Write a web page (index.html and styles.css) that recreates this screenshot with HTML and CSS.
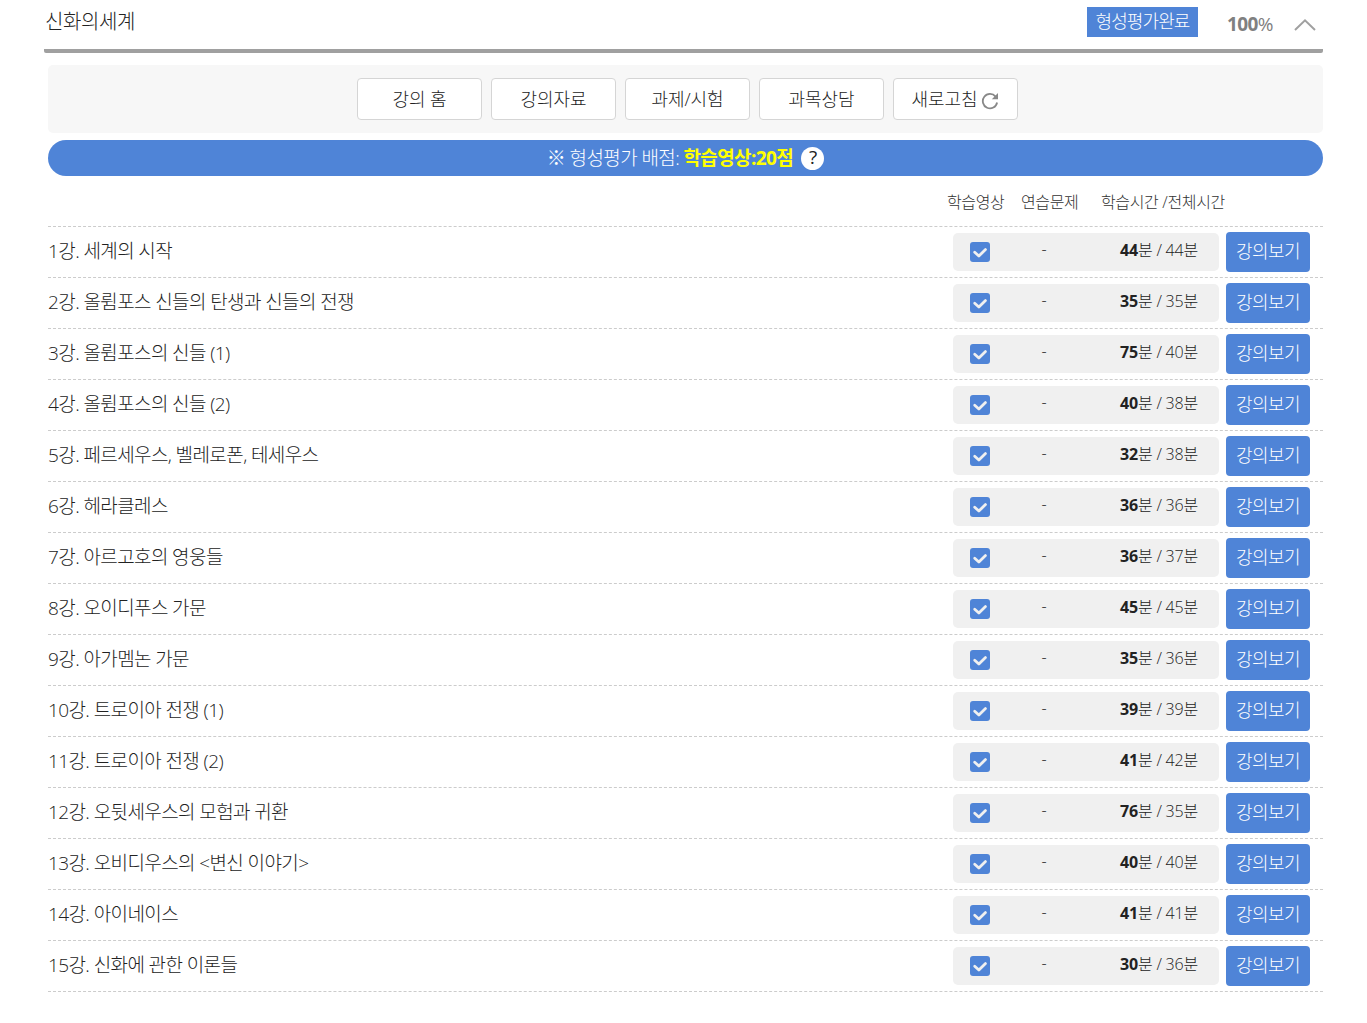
FILE: index.html
```html
<!DOCTYPE html>
<html lang="ko">
<head>
  <meta charset="utf-8">
  <title>신화의세계</title>
  <link rel="stylesheet" href="styles.css">
</head>
<body>
  <svg class="symbols" width="0" height="0">
    <symbol id="check" viewBox="0 0 20 20">
      <path d="M4.7 10.2 8.9 14 15.5 7.6" fill="none" stroke="#f0f0f0" stroke-width="2.8" stroke-linecap="round" stroke-linejoin="round"/>
    </symbol>
  </svg>
  <div class="course">
    <div class="course-header">
      <h1 class="course-title">신화의세계</h1>
      <span class="badge">형성평가완료</span>
      <span class="percent"><b>100</b>%</span>
      <svg class="toggle" width="22" height="12" viewBox="0 0 22 12" fill="none" stroke="#a0a0a0" stroke-width="2">
        <path d="M1 11 11 1.4 21 11"/>
      </svg>
    </div>
    <div class="course-body">
      <div class="menu">
        <a class="menu-btn">강의 홈</a>
        <a class="menu-btn">강의자료</a>
        <a class="menu-btn">과제/시험</a>
        <a class="menu-btn">과목상담</a>
        <a class="menu-btn">새로고침
          <svg class="refresh" width="18" height="18" viewBox="0 0 18 18">
            <path d="M14.6 4.6A7.2 7.2 0 1 0 16.1 10.5" fill="none" stroke="#888" stroke-width="1.8"/>
            <path d="M17 1v6.2h-6.2z" fill="#888"/>
          </svg>
        </a>
      </div>
      <div class="score">
        <span class="score-text">※ 형성평가 배점: <b>학습영상:20점</b></span>
        <span class="help">?</span>
      </div>
      <div class="list-head">
        <span class="col-video">학습영상</span>
        <span class="col-quiz">연습문제</span>
        <span class="col-time">학습시간 /전체시간</span>
      </div>
      <ul class="lectures">
        <li class="lecture">
          <span class="name">1강. 세계의 시작</span>
          <div class="status"><svg class="check"><use href="#check"/></svg><span class="quiz">-</span><span class="time"><b>44</b>분 / 44분</span></div>
          <a class="view-btn">강의보기</a>
        </li>
        <li class="lecture">
          <span class="name">2강. 올륌포스 신들의 탄생과 신들의 전쟁</span>
          <div class="status"><svg class="check"><use href="#check"/></svg><span class="quiz">-</span><span class="time"><b>35</b>분 / 35분</span></div>
          <a class="view-btn">강의보기</a>
        </li>
        <li class="lecture">
          <span class="name">3강. 올륌포스의 신들 (1)</span>
          <div class="status"><svg class="check"><use href="#check"/></svg><span class="quiz">-</span><span class="time"><b>75</b>분 / 40분</span></div>
          <a class="view-btn">강의보기</a>
        </li>
        <li class="lecture">
          <span class="name">4강. 올륌포스의 신들 (2)</span>
          <div class="status"><svg class="check"><use href="#check"/></svg><span class="quiz">-</span><span class="time"><b>40</b>분 / 38분</span></div>
          <a class="view-btn">강의보기</a>
        </li>
        <li class="lecture">
          <span class="name">5강. 페르세우스, 벨레로폰, 테세우스</span>
          <div class="status"><svg class="check"><use href="#check"/></svg><span class="quiz">-</span><span class="time"><b>32</b>분 / 38분</span></div>
          <a class="view-btn">강의보기</a>
        </li>
        <li class="lecture">
          <span class="name">6강. 헤라클레스</span>
          <div class="status"><svg class="check"><use href="#check"/></svg><span class="quiz">-</span><span class="time"><b>36</b>분 / 36분</span></div>
          <a class="view-btn">강의보기</a>
        </li>
        <li class="lecture">
          <span class="name">7강. 아르고호의 영웅들</span>
          <div class="status"><svg class="check"><use href="#check"/></svg><span class="quiz">-</span><span class="time"><b>36</b>분 / 37분</span></div>
          <a class="view-btn">강의보기</a>
        </li>
        <li class="lecture">
          <span class="name">8강. 오이디푸스 가문</span>
          <div class="status"><svg class="check"><use href="#check"/></svg><span class="quiz">-</span><span class="time"><b>45</b>분 / 45분</span></div>
          <a class="view-btn">강의보기</a>
        </li>
        <li class="lecture">
          <span class="name">9강. 아가멤논 가문</span>
          <div class="status"><svg class="check"><use href="#check"/></svg><span class="quiz">-</span><span class="time"><b>35</b>분 / 36분</span></div>
          <a class="view-btn">강의보기</a>
        </li>
        <li class="lecture">
          <span class="name">10강. 트로이아 전쟁 (1)</span>
          <div class="status"><svg class="check"><use href="#check"/></svg><span class="quiz">-</span><span class="time"><b>39</b>분 / 39분</span></div>
          <a class="view-btn">강의보기</a>
        </li>
        <li class="lecture">
          <span class="name">11강. 트로이아 전쟁 (2)</span>
          <div class="status"><svg class="check"><use href="#check"/></svg><span class="quiz">-</span><span class="time"><b>41</b>분 / 42분</span></div>
          <a class="view-btn">강의보기</a>
        </li>
        <li class="lecture">
          <span class="name">12강. 오뒷세우스의 모험과 귀환</span>
          <div class="status"><svg class="check"><use href="#check"/></svg><span class="quiz">-</span><span class="time"><b>76</b>분 / 35분</span></div>
          <a class="view-btn">강의보기</a>
        </li>
        <li class="lecture">
          <span class="name">13강. 오비디우스의 &lt;변신 이야기&gt;</span>
          <div class="status"><svg class="check"><use href="#check"/></svg><span class="quiz">-</span><span class="time"><b>40</b>분 / 40분</span></div>
          <a class="view-btn">강의보기</a>
        </li>
        <li class="lecture">
          <span class="name">14강. 아이네이스</span>
          <div class="status"><svg class="check"><use href="#check"/></svg><span class="quiz">-</span><span class="time"><b>41</b>분 / 41분</span></div>
          <a class="view-btn">강의보기</a>
        </li>
        <li class="lecture">
          <span class="name">15강. 신화에 관한 이론들</span>
          <div class="status"><svg class="check"><use href="#check"/></svg><span class="quiz">-</span><span class="time"><b>30</b>분 / 36분</span></div>
          <a class="view-btn">강의보기</a>
        </li>
      </ul>
    </div>
  </div>
</body>
</html>
```
FILE: styles.css
```css
:root {
  --blue: #4f84d7;
  --text: #222;
  --line: #ccc;
}

* {
  box-sizing: border-box;
}

body {
  margin: 0;
  background: #fff;
  color: var(--text);
  font-family: "Open Sans", "Noto Sans CJK KR", sans-serif;
  font-weight: 300;
  font-size: 19px;
  letter-spacing: -0.6px;
  overflow: hidden;
}

.symbols {
  display: block;
  position: absolute;
}

.course {
  width: 1279px;
  margin-left: 44px;
}

.course-header {
  display: flex;
  align-items: center;
  height: 53px;
  padding: 0 7px 9px 1px;
  border-bottom: 4px solid #a0a0a0;
  border-radius: 2px;
}

.course-title {
  flex: 1;
  margin: 0;
  padding-top: 4px;
  font-size: 20px;
  font-weight: 300;
  line-height: 36px;
  letter-spacing: -0.4px;
}

.badge {
  width: 111px;
  height: 30px;
  margin-top: 4px;
  background: var(--blue);
  color: #fff;
  font-size: 18px;
  line-height: 28px;
  letter-spacing: -0.9px;
  text-align: center;
}

.percent {
  margin: 8px 0 0 29px;
  width: 67px;
  color: #808080;
  font-weight: 400;
}

.toggle {
  margin-top: 10px;
}

.course-body {
  padding: 12px 0 0 4px;
}

.menu {
  display: flex;
  justify-content: center;
  gap: 9px;
  height: 68px;
  padding: 13px 0 13px 4px;
  background: #f7f7f7;
  border-radius: 5px;
}

.menu-btn {
  display: flex;
  align-items: center;
  justify-content: center;
  width: 125px;
  height: 42px;
  padding-bottom: 2px;
  border: 1px solid #d5d5d5;
  border-radius: 4px;
  background: #fff;
  font-size: 18px;
  letter-spacing: -0.1px;
}

.refresh {
  margin: 5px 0 0 4px;
}

.score {
  display: flex;
  align-items: center;
  justify-content: center;
  height: 36px;
  margin-top: 7px;
  border-radius: 18px;
  background: var(--blue);
  color: #fff;
}

.score-text {
  padding-bottom: 3px;
}

.score b {
  color: #ff0;
  font-weight: 700;
}

.help {
  width: 23px;
  height: 23px;
  margin-left: 8px;
  border-radius: 50%;
  background: #fff;
  color: var(--text);
  font-weight: 400;
  line-height: 21px;
  text-align: center;
}

.list-head {
  display: flex;
  height: 50px;
  padding-left: 899px;
  font-size: 16px;
  line-height: 52px;
  letter-spacing: -0.35px;
  color: #333;
}

.col-video {
  width: 74px;
}

.col-quiz {
  width: 80px;
}

.lectures {
  margin: 0;
  padding: 0;
  list-style: none;
  border-bottom: 1px dashed var(--line);
}

.lecture {
  display: flex;
  align-items: center;
  height: 51px;
  padding-right: 13px;
  border-top: 1px dashed var(--line);
}

.name {
  flex: 1;
  padding-bottom: 5px;
}

.status {
  display: flex;
  align-items: center;
  width: 266px;
  height: 38px;
  margin-right: 7px;
  padding-left: 17px;
  border-radius: 5px;
  background: #f0f0f0;
  font-size: 16px;
  letter-spacing: -0.2px;
}

.check {
  width: 20px;
  height: 20px;
  border-radius: 3px;
  background: var(--blue);
}

.quiz {
  width: 20px;
  margin: 0 66px 7px 44px;
  text-align: center;
}

.time {
  padding-bottom: 7px;
}

.time b {
  font-weight: 700;
}

.view-btn {
  width: 84px;
  height: 40px;
  border-radius: 4px;
  background: var(--blue);
  color: #fff;
  font-size: 18px;
  line-height: 39px;
  text-align: center;
}
```
